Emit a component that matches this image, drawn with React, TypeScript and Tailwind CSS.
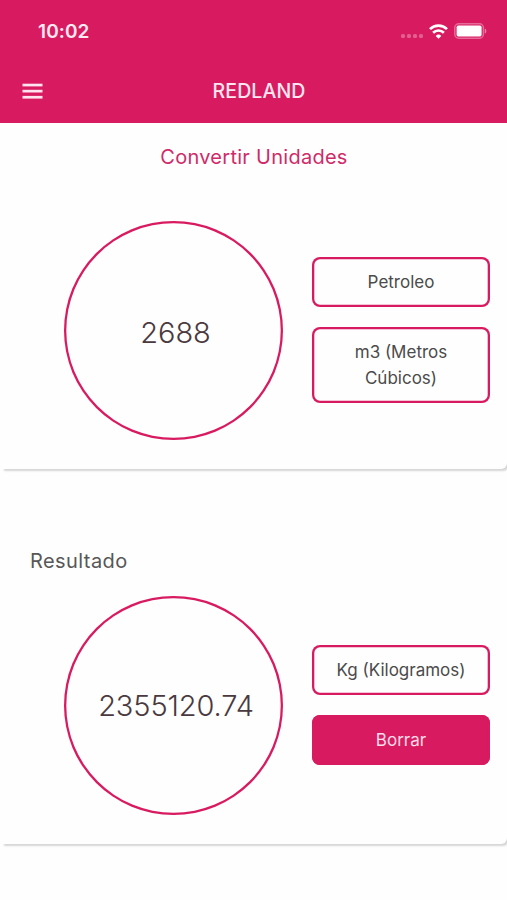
import type { ReactNode } from "react";

const statusDots = [0, 1, 2, 3];

function StatusBar() {
  return (
    <div className="flex h-[62px] items-center justify-between pr-[20px] pl-[38px]">
      <span className="mt-[2px] text-[19px] font-semibold tracking-[0.1px] text-[#ffe9f3]">10:02</span>
      <div className="flex items-center">
        <div className="mt-[9px] mr-[6px] flex gap-[2px]">
          {statusDots.map((dot) => (
            <span key={dot} className="size-[4px] rounded-[1.5px] bg-white/30" />
          ))}
        </div>
        <svg width="19" height="15" viewBox="0 0 19 15" fill="none">
          <path d="M1 5.1a12.2 12.2 0 0 1 17 0" stroke="#fff" strokeWidth="2.7" />
          <path d="M4.1 8.7a7.7 7.7 0 0 1 10.8 0" stroke="#fff" strokeWidth="2.6" />
          <path d="M9.5 14.8 6.7 11.9a4 4 0 0 1 5.6 0Z" fill="#fff" />
        </svg>
        <svg className="ml-[6px]" width="33" height="16" viewBox="0 0 33 16" fill="none">
          <rect x="0.8" y="0.8" width="28.6" height="14.4" rx="4" stroke="#fff" strokeOpacity="0.35" strokeWidth="1.5" />
          <rect x="2.6" y="2.6" width="25" height="10.8" rx="1.6" fill="#fff" />
          <path d="M30.8 5.4c2 .7 2 4.5 0 5.2Z" fill="#fff" fillOpacity="0.45" />
        </svg>
      </div>
    </div>
  );
}

function Header() {
  return (
    <header className="h-[123px] bg-[#d81b60]">
      <StatusBar />
      <div className="grid h-[58px] grid-cols-[1fr_auto_1fr] items-center pr-[11px] pl-[22px]">
        <button aria-label="Menu">
          <svg width="21" height="16" viewBox="0 0 21 16" fill="#ffe3ef">
            <rect x="0.5" y="0.7" width="20" height="2.7" />
            <rect x="0.5" y="6.8" width="20" height="2.7" />
            <rect x="0.5" y="12.9" width="20" height="2.7" />
          </svg>
        </button>
        <h1 className="mt-[2px] text-[19.5px] font-medium tracking-[0.1px] text-[#ffe6f0]">REDLAND</h1>
      </div>
    </header>
  );
}

function Card({ children }: { children: ReactNode }) {
  return (
    <section className="ml-[2px] rounded-br-[6px] bg-[#fefefe] shadow-[2px_2px_2px_rgba(0,0,0,0.16)]">
      {children}
    </section>
  );
}

function Circle({ children }: { children: ReactNode }) {
  return (
    <div className="flex size-[219px] items-center justify-center rounded-full text-[29px] text-[#4a3a40] shadow-[inset_0_0_0_2.3px_#d81b60]">
      {children}
    </div>
  );
}

function Option({ children, filled }: { children: ReactNode; filled?: boolean }) {
  return (
    <button
      className={`w-[178px] rounded-lg pt-[11.5px] pb-[12.5px] text-center text-[17px] leading-[26px] shadow-[inset_0_0_0_2.3px_#d81b60] ${
        filled ? "bg-[#d81b60] text-[#ffdbe9]" : "text-[#4b4b4b]"
      }`}
    >
      {children}
    </button>
  );
}

export default function App() {
  return (
    <div className="min-h-[900px] w-full overflow-hidden bg-[#fefefe] font-['Inter',sans-serif]">
      <Header />

      <Card>
        <div className="flex h-[346px] flex-col pt-[19px]">
          <h2 className="pr-px text-center text-[20px] leading-[30px] tracking-[0.27px] text-[#cf2a69]">
            Convertir Unidades
          </h2>
          <div className="mt-[49px] flex items-center gap-[29px] pl-[62px]">
            <Circle>
              <span className="mt-[5px] ml-[4px] font-[350]">2688</span>
            </Circle>
            <div className="-mt-px flex flex-col gap-[20px]">
              <Option>Petroleo</Option>
              <Option>
                m3 (Metros
                <br />
                Cúbicos)
              </Option>
            </div>
          </div>
        </div>
      </Card>

      <div className="mt-[72px]">
        <Card>
          <div className="flex h-[303px] flex-col pt-[5px]">
            <h2 className="pl-[28px] text-[20px] leading-[30px] tracking-[0.42px] text-[#575757]">
              Resultado
            </h2>
            <div className="mt-[20px] flex items-center gap-[29px] pl-[62px]">
              <Circle>
                <span className="mt-px ml-[5px] font-[350] tracking-[-0.1px]">2355120.74</span>
              </Circle>
              <div className="-mt-px flex flex-col gap-[20px]">
                <Option>Kg (Kilogramos)</Option>
                <Option filled>Borrar</Option>
              </div>
            </div>
          </div>
        </Card>
      </div>
    </div>
  );
}
